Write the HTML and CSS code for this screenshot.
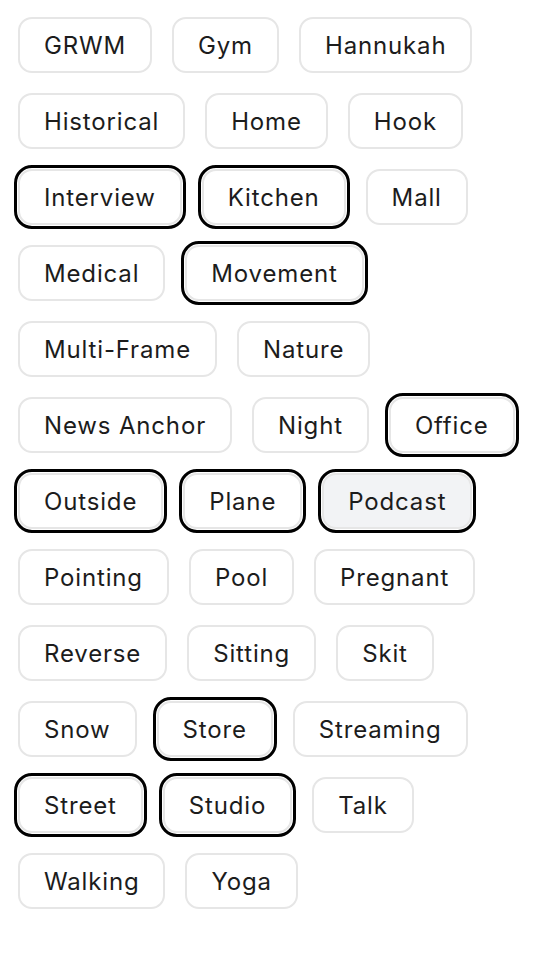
FILE: index.html
```html
<!DOCTYPE html>
<html lang="en">
<head>
    <meta charset="UTF-8">
    <meta name="viewport" content="width=device-width, initial-scale=1.0">
    <title>Tags</title>
    <link rel="stylesheet" href="styles.css">
</head>
<body>
    <div class="tags">
        <button class="tag">GRWM</button>
        <button class="tag">Gym</button>
        <button class="tag">Hannukah</button>
        <button class="tag">Historical</button>
        <button class="tag">Home</button>
        <button class="tag">Hook</button>
        <button class="tag selected">Interview</button>
        <button class="tag selected">Kitchen</button>
        <button class="tag">Mall</button>
        <button class="tag">Medical</button>
        <button class="tag selected">Movement</button>
        <button class="tag">Multi-Frame</button>
        <button class="tag">Nature</button>
        <button class="tag">News Anchor</button>
        <button class="tag">Night</button>
        <button class="tag selected">Office</button>
        <button class="tag selected">Outside</button>
        <button class="tag selected">Plane</button>
        <button class="tag selected hover">Podcast</button>
        <button class="tag">Pointing</button>
        <button class="tag">Pool</button>
        <button class="tag">Pregnant</button>
        <button class="tag">Reverse</button>
        <button class="tag">Sitting</button>
        <button class="tag">Skit</button>
        <button class="tag">Snow</button>
        <button class="tag selected">Store</button>
        <button class="tag">Streaming</button>
        <button class="tag selected">Street</button>
        <button class="tag selected">Studio</button>
        <button class="tag">Talk</button>
        <button class="tag">Walking</button>
        <button class="tag">Yoga</button>
    </div>
</body>
</html>
```

FILE: styles.css
```css
body {
    margin: 0;
    padding: 0;
    background-color: #fff;
    font-family: Inter, 'Noto Sans', sans-serif;
}

.tags {
    display: flex;
    flex-wrap: wrap;
    gap: 20px;
    padding: 17px 18px;
    max-width: 520px;
}

.tag {
    height: 56px;
    padding: 0 24px;
    border: 2px solid #e6e6e6;
    border-radius: 14px;
    background-color: #fff;
    color: #1c1c1c;
    font-family: inherit;
    font-size: 24px;
    font-weight: 400;
    letter-spacing: 0.035em;
    cursor: pointer;
}

.tag.selected {
    outline: 3px solid #000;
    outline-offset: 1px;
}

.tag.hover {
    background-color: #f2f3f5;
}
```
